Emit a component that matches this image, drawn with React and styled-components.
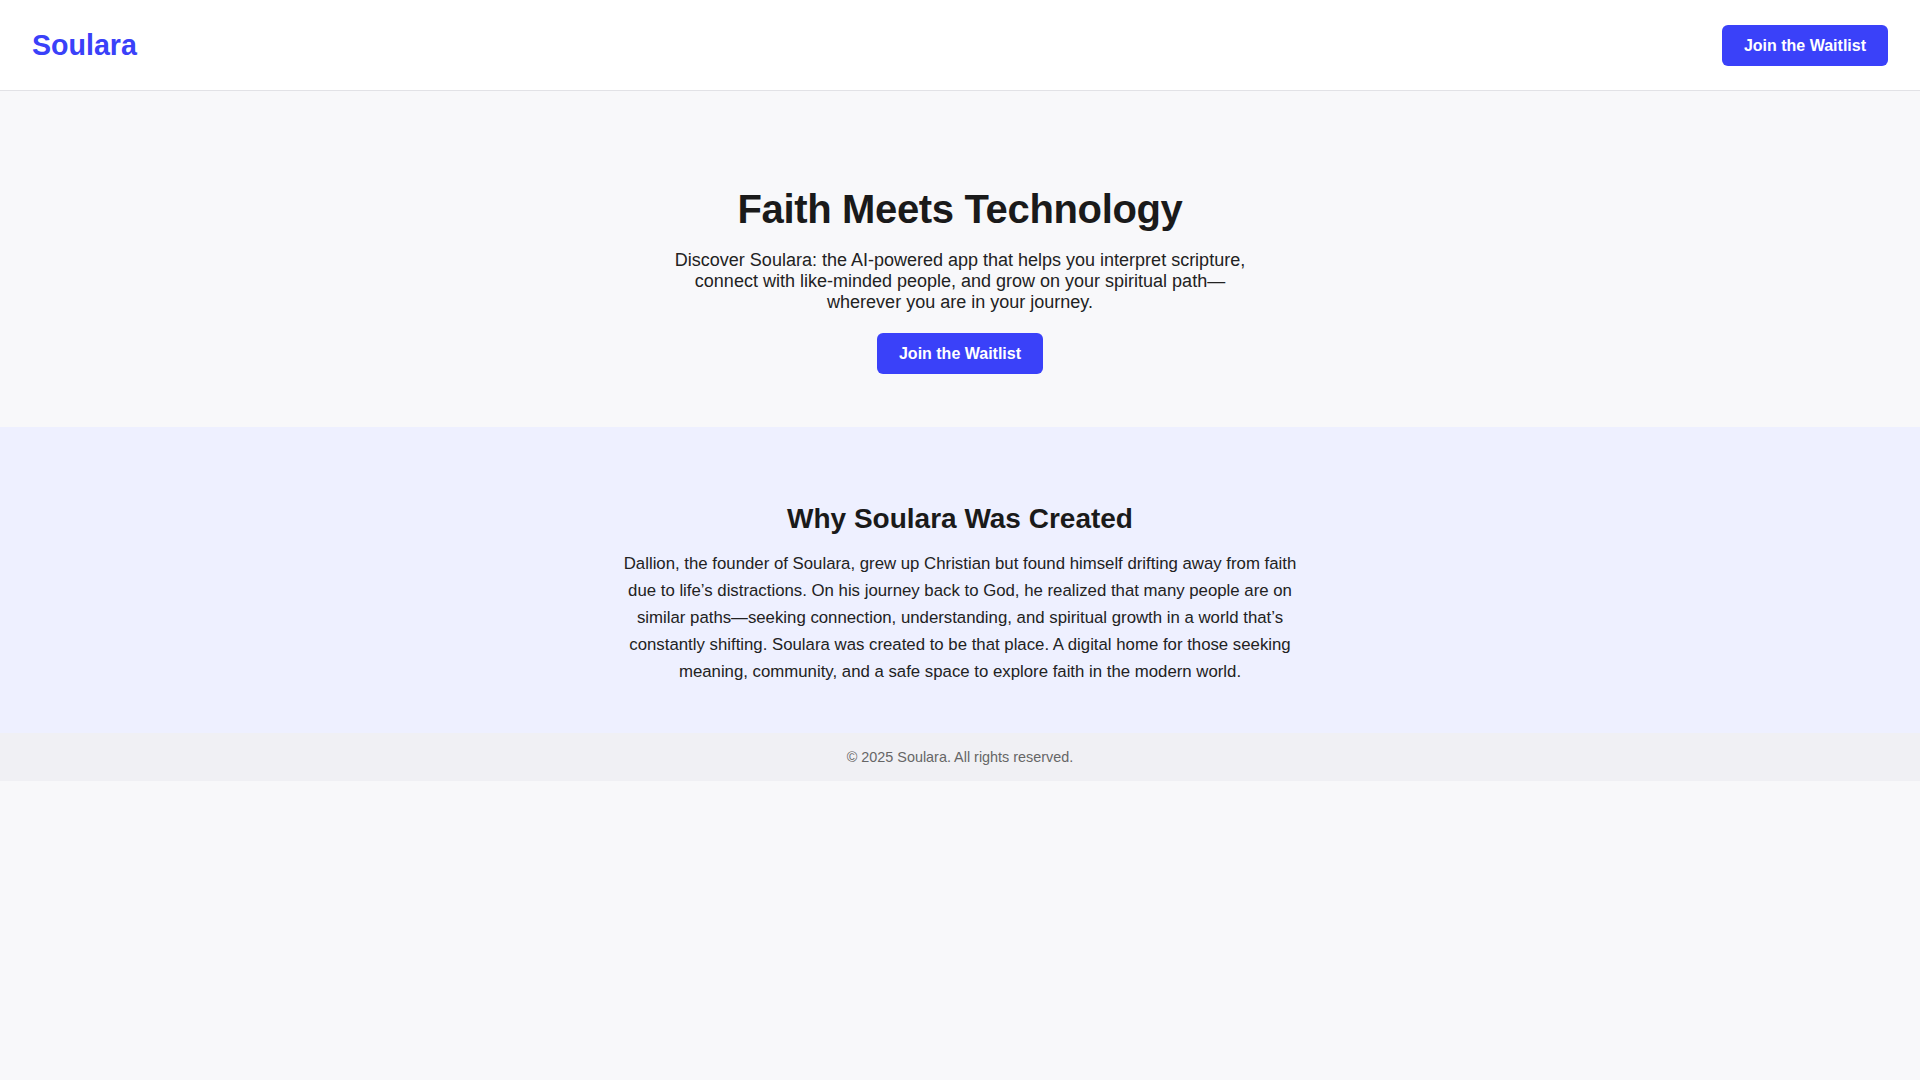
import React from "react";
import styled, { createGlobalStyle } from "styled-components";

const colors = {
    blue: "#3a41f9",
    ink: "#1a1a1a",
    text: "#222222",
    muted: "#666666",
    page: "#f8f8fa",
    lavender: "#eef0ff",
    footer: "#f0f0f4",
    line: "#e2e2e6",
};

const GlobalStyle = createGlobalStyle`
    * {
        box-sizing: border-box;
    }

    body {
        margin: 0;
        background: ${colors.page};
        color: ${colors.text};
        font-family: "Liberation Sans", Arial, sans-serif;
    }
`;

const Header = styled.header`
    height: 91px;
    padding: 0 32px;
    display: flex;
    align-items: center;
    justify-content: space-between;
    background: #ffffff;
    border-bottom: 1px solid ${colors.line};
`;

const Logo = styled.div`
    font-size: 28.6px;
    font-weight: 700;
    color: ${colors.blue};
`;

const WaitlistButton = styled.button`
    padding: 11px 22px;
    border: 0;
    border-radius: 6px;
    background: ${colors.blue};
    color: #ffffff;
    font-family: inherit;
    font-size: 16px;
    font-weight: 700;
    line-height: 19px;
    cursor: pointer;
`;

const Hero = styled.section`
    padding: 96px 32px 53px;
    display: flex;
    flex-direction: column;
    align-items: center;
    text-align: center;
`;

const HeroTitle = styled.h1`
    margin: 0 0 18px;
    font-size: 40px;
    font-weight: 700;
    letter-spacing: -0.35px;
    color: ${colors.ink};
`;

const HeroText = styled.p`
    max-width: 600px;
    margin: 0 0 20px;
    font-size: 18px;
    color: ${colors.text};
`;

const Story = styled.section`
    padding: 76px 32px 48px;
    background: ${colors.lavender};
    display: flex;
    flex-direction: column;
    align-items: center;
    text-align: center;
`;

const StoryTitle = styled.h2`
    margin: 0 0 16px;
    font-size: 28px;
    font-weight: 700;
    color: ${colors.ink};
`;

const StoryText = styled.p`
    max-width: 700px;
    margin: 0;
    font-size: 16.8px;
    line-height: 1.6;
    color: ${colors.text};
`;

const Footer = styled.footer`
    padding: 16px;
    background: ${colors.footer};
    text-align: center;
    font-size: 14.4px;
    color: ${colors.muted};
`;

const App = () => {
    return (
        <>
            <GlobalStyle />
            <Header>
                <Logo>Soulara</Logo>
                <WaitlistButton type="button">Join the Waitlist</WaitlistButton>
            </Header>

            <Hero>
                <HeroTitle>Faith Meets Technology</HeroTitle>
                <HeroText>
                    Discover Soulara: the AI-powered app that helps you interpret scripture,
                    connect with like-minded people, and grow on your spiritual path—wherever
                    you are in your journey.
                </HeroText>
                <WaitlistButton type="button">Join the Waitlist</WaitlistButton>
            </Hero>

            <Story>
                <StoryTitle>Why Soulara Was Created</StoryTitle>
                <StoryText>
                    Dallion, the founder of Soulara, grew up Christian but found himself drifting
                    away from faith due to life’s distractions. On his journey back to God, he
                    realized that many people are on similar paths—seeking connection,
                    understanding, and spiritual growth in a world that’s constantly shifting.
                    Soulara was created to be that place. A digital home for those seeking
                    meaning, community, and a safe space to explore faith in the modern world.
                </StoryText>
            </Story>

            <Footer>© 2025 Soulara. All rights reserved.</Footer>
        </>
    );
};

export default App;
